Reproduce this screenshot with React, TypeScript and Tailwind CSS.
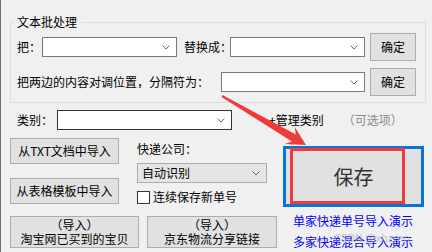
import React from 'react';

function Chevron() {
  return (
    <svg width="8" height="5" viewBox="0 0 8 5" className="shrink-0">
      <polyline points="0.5,0.5 4,4 7.5,0.5" fill="none" stroke="#6b6b6b" strokeWidth="1" />
    </svg>
  );
}

function Combo({ className, value }: { className: string; value?: string }) {
  return (
    <div className={`flex h-[20px] shrink-0 items-center justify-between border pr-[6px] pl-[4px] ${className}`}>
      <span>{value}</span>
      <Chevron />
    </div>
  );
}

function Btn({ className, children }: { className: string; children: React.ReactNode }) {
  return (
    <button
      className={`flex shrink-0 flex-col items-center justify-center border border-[#adadad] bg-[#e1e1e1] whitespace-nowrap text-black ${className}`}
    >
      {children}
    </button>
  );
}

export default function App() {
  return (
    <div className="relative h-[252px] w-[432px] overflow-hidden border-l border-[#6e6e6e] bg-[#f0f0f0] text-[12px] leading-[16px] text-black [font-family:'Noto_Sans_CJK_SC',sans-serif]">
      {/* 文本批处理 */}
      <fieldset className="mt-[14px] ml-[9px] h-[89px] w-[416px] border border-[#dcdcdc] pl-[2px]">
        <legend className="px-[4px] leading-[16px]">文本批处理</legend>
        <div className="mt-[3px] flex h-[28px] items-center pl-[4px] whitespace-nowrap">
          <span className="w-[25px] shrink-0">把：</span>
          <Combo className="w-[135px] border-[#7a7a7a] bg-white" />
          <span className="ml-[7px] w-[46px] shrink-0">替换成：</span>
          <Combo className="w-[135px] border-[#7a7a7a] bg-white" />
          <Btn className="ml-[5px] h-[28px] w-[46px]">确定</Btn>
        </div>
        <div className="mt-[7px] flex h-[28px] items-center pl-[4px] whitespace-nowrap">
          <span className="w-[204px] shrink-0">把两边的内容对调位置，分隔符为：</span>
          <Combo className="w-[144px] border-[#7a7a7a] bg-white" />
          <Btn className="ml-[5px] h-[28px] w-[46px]">确定</Btn>
        </div>
      </fieldset>

      {/* 类别 */}
      <div className="mt-[7px] flex h-[20px] items-center pl-[16px] whitespace-nowrap">
        <span className="w-[40px] shrink-0">类别：</span>
        <Combo className="w-[175px] border-[#333333] bg-white" />
        <span className="ml-[37px]">+管理类别</span>
        <span className="ml-[19px] text-[#8c8c8c]">（可选项）</span>
      </div>

      <div className="mt-[8px] flex pl-[9px] whitespace-nowrap">
        <div className="flex flex-col">
          <div className="flex items-start">
            <div className="flex w-[109px] flex-col gap-[14px]">
              <Btn className="h-[26px] w-[109px]">从TXT文档中导入</Btn>
              <Btn className="h-[26px] w-[109px]">从表格模板中导入</Btn>
            </div>
            <div className="mt-[3px] ml-[18px] flex flex-col">
              <span>快递公司：</span>
              <Combo className="mt-[6px] w-[130px] border-[#acacac] bg-[#e5e5e5]" value="自动识别" />
              <label className="mt-[6px] flex h-[16px] items-center">
                <span className="h-[13px] w-[13px] border border-[#333333] bg-white" />
                <span className="ml-[3px]">连续保存新单号</span>
              </label>
            </div>
          </div>
          <div className="mt-[11px] flex">
            <Btn className="h-[32px] w-[129px] leading-[14px]">
              <span>（导入）</span>
              <span>淘宝网已买到的宝贝</span>
            </Btn>
            <Btn className="ml-[8px] h-[32px] w-[130px] leading-[14px]">
              <span>（导入）</span>
              <span>京东物流分享链接</span>
            </Btn>
          </div>
        </div>

        <div className="mt-[8px] ml-[6px] flex flex-col">
          <button className="relative flex h-[61px] w-[141px] items-center justify-center border-[3px] border-[#0a74d6] bg-[#e1e1e1] text-[20px] text-[#333333]">
            保存
            <span className="absolute top-[-1px] left-[4px] h-[56px] w-[115px] border-[3px] border-[#ee3b3b]" />
          </button>
          <div className="mt-[6px] flex flex-col gap-[5px] pl-[10px] text-[#0000ff]">
            <span>单家快递单号导入演示</span>
            <span>多家快递混合导入演示</span>
          </div>
        </div>
      </div>

      {/* watermark */}
      <span className="pointer-events-none absolute top-[229px] left-[333px] text-[11px] text-[#b4b4b4] opacity-70">
        CSDN @xhzmn
      </span>

      {/* red arrow */}
      <svg className="pointer-events-none absolute top-0 -left-px" width="432" height="252" viewBox="0 0 432 252">
        <polygon
          points="221.5,96.9 291.9,141.4 284.6,144 306,145 294.6,126.8 295.9,134.4 222.5,95.1"
          fill="#ef3b3b"
        />
      </svg>
    </div>
  );
}
